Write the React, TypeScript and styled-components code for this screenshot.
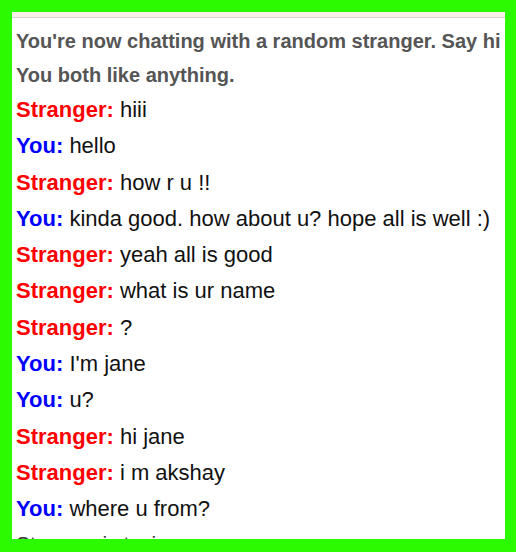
import React from "react";
import styled, { createGlobalStyle } from "styled-components";

const GlobalStyle = createGlobalStyle`
  html, body {
    margin: 0;
    padding: 0;
    background: #2bfa00;
  }
  body {
    font-family: "Liberation Sans", Arial, Helvetica, sans-serif;
  }
`;

const Frame = styled.div`
  width: 516px;
  height: 552px;
  box-sizing: border-box;
  padding: 12px 11px 13px 12px;
  background: #2bfa00;
`;

const Panel = styled.div`
  height: 100%;
  background: #ffffff;
  overflow: hidden;
  display: flex;
  flex-direction: column;
`;

const TopBand = styled.div`
  height: 5px;
  background: #fbefea;
  border-bottom: 1px solid #d6d6d6;
  flex: none;
`;

const Log = styled.div`
  padding: 6px 0 0 4px;
  display: flex;
  flex-direction: column;
`;

const StatusLine = styled.div`
  font-size: 20px;
  line-height: 34px;
  font-weight: bold;
  color: #555555;
  white-space: nowrap;
`;

const MessageLine = styled.div`
  font-size: 22px;
  line-height: 36.3px;
  color: #111111;
  white-space: nowrap;
`;

const Speaker = styled.strong<{ $who: "stranger" | "you" }>`
  font-weight: bold;
  color: ${(p) => (p.$who === "stranger" ? "#ff0000" : "#0000ff")};
`;

const TypingLine = styled(StatusLine)`
  font-weight: normal;
  font-size: 21px;
  line-height: 32px;
  color: #333333;
`;

type Msg = { who: "stranger" | "you"; text: string };

const messages: Msg[] = [
  { who: "stranger", text: "hiii" },
  { who: "you", text: "hello" },
  { who: "stranger", text: "how r u !!" },
  { who: "you", text: "kinda good. how about u? hope all is well :)" },
  { who: "stranger", text: "yeah all is good" },
  { who: "stranger", text: "what is ur name" },
  { who: "stranger", text: "?" },
  { who: "you", text: "I'm jane" },
  { who: "you", text: "u?" },
  { who: "stranger", text: "hi jane" },
  { who: "stranger", text: "i m akshay" },
  { who: "you", text: "where u from?" },
];

export default function App() {
  return (
    <>
      <GlobalStyle />
      <Frame>
        <Panel>
          <TopBand />
          <Log>
            <StatusLine>You're now chatting with a random stranger. Say hi</StatusLine>
            <StatusLine>You both like anything.</StatusLine>
            {messages.map((m, i) => (
              <MessageLine key={i}>
                <Speaker $who={m.who}>{m.who === "stranger" ? "Stranger:" : "You:"}</Speaker> {m.text}
              </MessageLine>
            ))}
            <TypingLine>Stranger is typing...</TypingLine>
          </Log>
        </Panel>
      </Frame>
    </>
  );
}
